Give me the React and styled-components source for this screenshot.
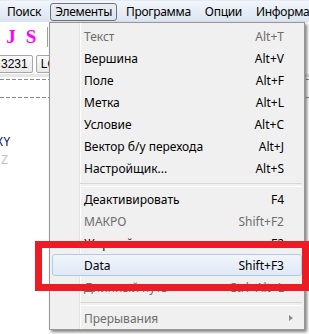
import React from 'react';
import styled, { createGlobalStyle } from 'styled-components';

const Global = createGlobalStyle`
  html, body { margin: 0; padding: 0; background: #fff; }
  body { width: 309px; height: 334px; overflow: hidden; font-family: "Noto Sans", "Liberation Sans", sans-serif; }
  * { box-sizing: border-box; }
`;

const Screen = styled.div`
  position: relative;
  width: 309px;
  height: 334px;
  overflow: hidden;
  background: #fff;
  display: flex;
  flex-direction: column;
`;

const MenuBar = styled.div`
  height: 22px;
  flex: none;
  display: flex;
  align-items: center;
  gap: 4px;
  padding-left: 2px;
  background: linear-gradient(#f2f6fb, #dbe4f0);
  border-top: 1px solid #e4ebf5;
  white-space: nowrap;
`;

const MenuTitle = styled.div`
  height: 18px;
  padding: 0 4px;
  display: flex;
  align-items: center;
  font-size: 12px;
  letter-spacing: -0.3px;
  color: #000;
  border: 1px solid ${p => (p.$active ? '#6f7378' : 'transparent')};
  border-radius: 3px;
  background: ${p => (p.$active ? 'linear-gradient(#eaeef4, #dde3ec)' : 'transparent')};
`;

const Workspace = styled.div`
  flex: 1;
  display: flex;
  flex-direction: column;
  background: #fff;
`;

const Toolbar = styled.div`
  height: 30px;
  display: flex;
  align-items: center;
  padding-left: 1px;
`;

const ToolGlyph = styled.div`
  width: 20px;
  height: 24px;
  display: flex;
  align-items: center;
  justify-content: center;
  font-family: "Liberation Serif", serif;
  font-weight: bold;
  font-size: 19px;
  color: #ff00ff;
`;

const ToolSep = styled.div`
  width: 2px;
  height: 20px;
  margin-left: 6px;
  border-left: 1px solid #a0a0a0;
  border-right: 1px solid #fff;
`;

const TabRow = styled.div`
  height: 25px;
  display: flex;
  align-items: flex-start;
  gap: 3px;
  padding-top: 3px;
  margin-left: -4px;
  background: #fff;
  border-bottom: 3px solid #e6e6e6;
`;

const TabButton = styled.div`
  height: 18px;
  padding: 0 4px;
  display: flex;
  align-items: center;
  font-family: "Liberation Sans", sans-serif;
  font-size: 12px;
  color: #000;
  background: linear-gradient(#fafafa, #e8e8e8);
  border: 1px solid #a6a6a6;
  border-radius: 2px;
`;

const Canvas = styled.div`
  flex: 1;
  padding-top: 2px;
  overflow: hidden;
`;

const Dashed = styled.div`
  height: 1px;
  margin-top: ${p => p.$gap}px;
  background: repeating-linear-gradient(to right, #8a8a8a 0 4px, transparent 4px 6px);
`;

const CodeLine = styled.div`
  height: 18px;
  margin-left: ${p => p.$indent}px;
  margin-top: ${p => p.$top || 0}px;
  font-family: "Liberation Mono", monospace;
  font-size: 12px;
  line-height: 18px;
  color: ${p => p.$color};
`;

const Dropdown = styled.div`
  position: absolute;
  left: 49px;
  top: 22px;
  width: 256px;
  padding: 2px 0 0;
  border: 1px solid #979797;
  background: linear-gradient(to right, #f0f0f0 0 29px, #e2e3e3 29px 30px, #ffffff 30px 31px, #f0f0f0 31px);
  box-shadow: 2px 2px 3px rgba(0, 0, 0, 0.5);
  font-size: 12px;
  white-space: nowrap;
`;

const Item = styled.div`
  height: 22px;
  margin: 0 2px;
  padding: 0 ${p => (p.$submenu ? 4 : 17)}px 0 31px;
  display: flex;
  align-items: center;
  border: 1px solid ${p => (p.$hover ? '#aeccef' : 'transparent')};
  border-radius: 3px;
  background: ${p => (p.$hover ? 'linear-gradient(#f1f5fb, #dfe9f6)' : 'transparent')};
  color: ${p => (p.$disabled ? '#6d6d6d' : '#000')};
`;

const Label = styled.span`
  flex: 1;
`;

const Shortcut = styled.span`
  flex: none;
`;

const ArrowCell = styled.span`
  width: 13px;
  flex: none;
  display: flex;
  align-items: center;
  padding-left: 5px;
`;

const Arrow = styled.span`
  width: 0;
  height: 0;
  border-top: 3.5px solid transparent;
  border-bottom: 3.5px solid transparent;
  border-left: 4px solid #8c8c8c;
`;

const Separator = styled.div`
  height: 9px;
  margin: 0 2px 0 30px;
  padding-top: 4px;
  &::after {
    content: '';
    display: block;
    height: 2px;
    border-top: 1px solid #d7d7d7;
    border-bottom: 1px solid #ffffff;
  }
`;

const Highlight = styled.div`
  position: absolute;
  left: 35px;
  top: 241px;
  width: 274px;
  height: 50px;
  border: 7px solid #ed1c24;
`;

const menuTitles = ['Поиск', 'Элементы', 'Программа', 'Опции', 'Информация'];

const groups = [
  [
    { label: 'Текст', key: 'Alt+T', disabled: true },
    { label: 'Вершина', key: 'Alt+V' },
    { label: 'Поле', key: 'Alt+F' },
    { label: 'Метка', key: 'Alt+L' },
    { label: 'Условие', key: 'Alt+C' },
    { label: 'Вектор б/у перехода', key: 'Alt+J' },
    { label: 'Настройщик...', key: 'Alt+S' },
  ],
  [
    { label: 'Деактивировать', key: 'F4' },
    { label: 'МАКРО', key: 'Shift+F2', disabled: true },
    { label: 'Жирный', key: 'F2' },
    { label: 'Data', key: 'Shift+F3', hover: true },
    { label: 'Длинный путь', key: 'Ctrl+Alt+L', disabled: true },
  ],
  [{ label: 'Прерывания', submenu: true, disabled: true }],
];

export default function App() {
  return (
    <Screen>
      <Global />
      <MenuBar>
        {menuTitles.map(t => (
          <MenuTitle key={t} $active={t === 'Элементы'}>{t}</MenuTitle>
        ))}
      </MenuBar>
      <Workspace>
        <Toolbar>
          <ToolGlyph>J</ToolGlyph>
          <ToolGlyph>S</ToolGlyph>
          <ToolSep />
        </Toolbar>
        <TabRow>
          <TabButton>3231</TabButton>
          <TabButton>LC</TabButton>
        </TabRow>
        <Canvas>
          <Dashed $gap={0} />
          <Dashed $gap={17} />
          <CodeLine $indent={-4} $top={36} $color="#10104a">XY</CodeLine>
          <CodeLine $indent={1} $color="#c4c4c4">Z</CodeLine>
        </Canvas>
      </Workspace>
      <Dropdown>
        {groups.map((g, gi) => (
          <React.Fragment key={gi}>
            {gi > 0 && <Separator />}
            {g.map(it => (
              <Item key={it.label} $disabled={it.disabled} $hover={it.hover} $submenu={it.submenu}>
                <Label>{it.label}</Label>
                {it.key && <Shortcut>{it.key}</Shortcut>}
                {it.submenu && (
                  <ArrowCell><Arrow /></ArrowCell>
                )}
              </Item>
            ))}
          </React.Fragment>
        ))}
      </Dropdown>
      <Highlight />
    </Screen>
  );
}
